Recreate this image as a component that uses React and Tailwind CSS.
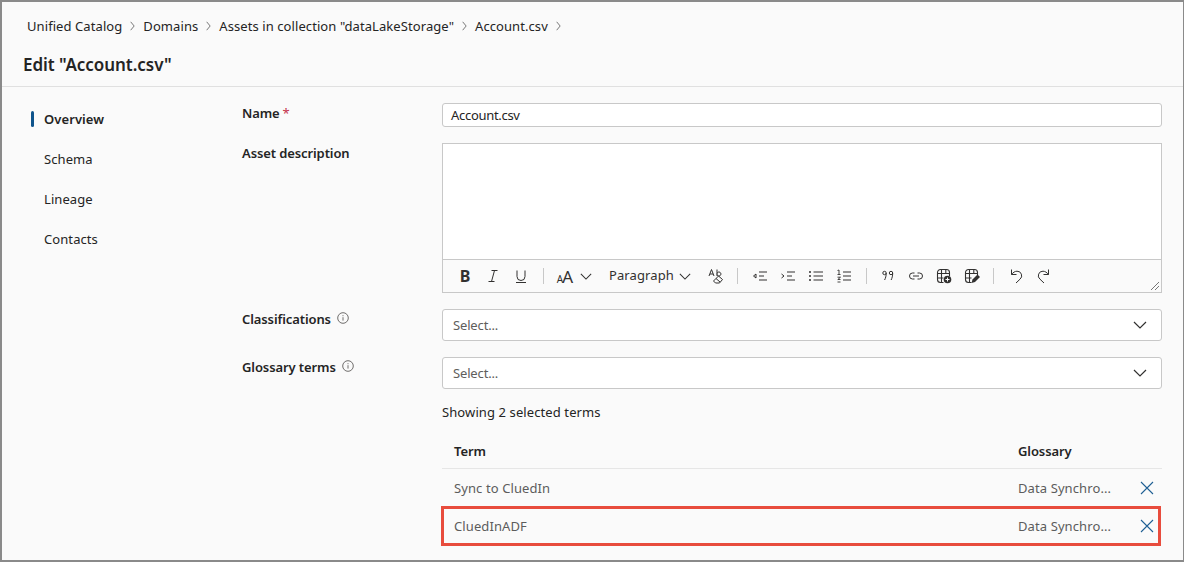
import React from "react";

const Chev = () => (
  <svg width="5" height="10" viewBox="0 0 6 10" fill="none" stroke="#6b6b6b" strokeWidth="1" preserveAspectRatio="none"><path d="M0.8 0.8 5 5 0.8 9.2" /></svg>
);
const Down = ({ w = 14, h = 8, color = "#323130" }) => (
  <svg width={w} height={h} viewBox="0 0 14 8" fill="none" stroke={color} strokeWidth="1.2"><path d="M1 1l6 6 6-6" /></svg>
);
const Info = () => (
  <svg width="12" height="12" viewBox="0 0 12 12" fill="none" stroke="#605e5c" strokeWidth="0.9"><circle cx="6" cy="6" r="5.3" /><path d="M6 5.2v3.4M6 3.2v1" /></svg>
);
const X = () => (
  <svg width="14" height="14" viewBox="0 0 14 14" fill="none" stroke="#1f5f94" strokeWidth="1.1"><path d="M1 1l12 12M13 1L1 13" /></svg>
);
const Sep = ({ cls = "" }) => <span className={`h-4 w-px shrink-0 bg-[#c8c8c8] ${cls}`} />;
const Slot = ({ children, cls = "" }) => (
  <span className={`flex w-7 shrink-0 justify-center ${cls}`}>
    <svg width="16" height="16" viewBox="0 0 16 16" fill="none" stroke="#323130" strokeWidth="1">{children}</svg>
  </span>
);

const Crumb = ({ children }) => (
  <>
    <span>{children}</span>
    <Chev />
  </>
);

const Row = ({ label, info, req, children, className = "" }) => (
  <div className={`flex ${className}`}>
    <div className="flex w-[200px] shrink-0 items-start gap-[5px] text-[13px] font-semibold leading-5 tracking-[-0.1px] text-[#242424]">
      <span>{label}</span>
      {req && <span className="-ml-[2px] font-normal text-[#c4314b]">*</span>}
      {info && <span className="mt-[3px] ml-[1px]"><Info /></span>}
    </div>
    <div className="w-[720px]">{children}</div>
  </div>
);

const Select = () => (
  <div className="flex h-8 items-center justify-between rounded-[3px] border border-[#c8c8c8] bg-white pl-[10px] pr-[14px] text-[13px] tracking-[-0.15px] text-[#605e5c]">
    <span className="pt-[2px]">Select...</span>
    <Down />
  </div>
);

export default function App() {
  return (
    <div
      className="h-[562px] w-[1184px] overflow-hidden border-2 border-r border-[#8a8a8a] bg-[#fafafa] text-[#242424]"
      style={{ fontFamily: '"Noto Sans", "Open Sans", sans-serif', letterSpacing: "0.08px" }}
    >
      <div className="flex h-[49px] items-center gap-2 pb-px pl-[25px] text-[13px] leading-5">
        <Crumb>Unified Catalog</Crumb>
        <Crumb>Domains</Crumb>
        <Crumb>Assets in collection "dataLakeStorage"</Crumb>
        <Crumb>Account.csv</Crumb>
      </div>
      <div className="flex h-[36px] items-start border-b border-[#e0e0e0] pl-[21px]">
        <h1 className="text-[17px] font-semibold leading-7 tracking-[-0.05px]">Edit "Account.csv"</h1>
      </div>
      <div className="flex">
        <nav className="w-[240px] shrink-0 pt-[23px] pl-[29px] text-[13px]">
          {["Overview", "Schema", "Lineage", "Contacts"].map((n, i) => (
            <div key={n} className="flex h-[40px] items-start">
              <span className={`mt-[1px] mr-[10px] h-[16px] w-[3px] rounded-sm ${i === 0 ? "bg-[#0f548c]" : ""}`} />
              <span className={`leading-[18px] ${i === 0 ? "font-semibold" : ""}`}>{n}</span>
            </div>
          ))}
        </nav>
        <div className="pt-[16px]">
          <Row label="Name" req>
            <div className="flex h-6 items-center rounded-[3px] border border-[#c8c8c8] bg-white pl-2 pt-[2px] text-[13px] tracking-[-0.3px]">Account.csv</div>
          </Row>
          <Row label="Asset description" className="mt-4">
            <div className="relative h-[150px] border border-[#c8c8c8] bg-white">
              <div className="h-[116px] border-b border-[#c8c8c8]" />
              <div className="flex h-[32px] items-center bg-[#fafafa] pl-2 text-[13px] text-[#323130]">
                <span className="w-7 shrink-0 text-center text-[16px] font-bold leading-none">B</span>
                <Slot><path d="M6.500 2.500h6M3.500 13.500h6M9.500 2.500l-3 11" /></Slot>
                <Slot><path d="M4 2.500v6a4 4 0 0 0 8 0v-6M3 14.500h10" /></Slot>
                <Sep cls="ml-2" />
                <span className="ml-[14px] flex w-[14px] shrink-0 items-baseline justify-center whitespace-nowrap font-normal leading-none"><span className="text-[10px]">A</span><span className="-ml-[1px] text-[17px]">A</span></span>
                <span className="ml-2 flex shrink-0"><Down w={12} h={7} /></span>
                <span className="ml-[17px] w-[64px] shrink-0 whitespace-nowrap tracking-[0.1px]">Paragraph</span>
                <span className="ml-[6px] flex shrink-0"><Down w={12} h={7} /></span>
                <span className="ml-[17px] w-4 shrink-0">
                  <svg width="16" height="16" viewBox="0 0 16 16" fill="none" stroke="#323130" strokeWidth="1"><path d="M1 8 3.500 1.500 6 8M2 6h3M9 1.500V8M9 5.500a2 2 0 1 1 0 1" /><path d="M5.500 13l5-5 4 3.500-3 3.500H7.500zM8 10.500l4 3.500" /></svg>
                </span>
                <Sep cls="ml-[13px]" />
                <Slot cls="ml-2"><path d="M1.500 8 4 6v4zM7 4h8M7 8h5M7 12h8" /></Slot>
                <Slot><path d="M1.500 6 4 8l-2.500 2M7 4h8M7 8h5M7 12h8" /></Slot>
                <Slot><path d="M1 4h2M1 8h2M1 12h2" strokeWidth="1.600" /><path d="M5.500 4h9.500M5.500 8h9.500M5.500 12h9.500" /></Slot>
                <Slot><path d="M1.500 2.500 3 2v4M1.500 6.500h3M1.500 9.200h3L1.800 11.500h2.700M1.500 14h3" strokeWidth=".9" /><path d="M7 4h8M7 8h8M7 12h8" /></Slot>
                <Sep cls="ml-2" />
                <Slot cls="ml-[7px]"><circle cx="4.500" cy="5" r="1.700" /><circle cx="11" cy="5" r="1.700" /><path d="M6.200 5c0 3-.6 5-1.600 7M12.700 5c0 3-.6 5-1.600 7" /></Slot>
                <Slot><path d="M6.500 5H4.500a3 3 0 0 0 0 6h2M9.500 5h2a3 3 0 0 1 0 6h-2M5 8h6" /></Slot>
                <Slot><path d="M4.500 1.500h6a3 3 0 0 1 3 3V8M7.500 14.500h-3a3 3 0 0 1-3-3v-7a3 3 0 0 1 3-3M1.500 5.500h12M1.500 10h6M5.500 1.500v13M9.800 1.500v4" strokeWidth="1.100" /><circle cx="11.500" cy="11.500" r="3.800" fill="#323130" stroke="none" /><path d="M11.500 9.500v4M9.500 11.500h4" stroke="#fff" /></Slot>
                <Slot><path d="M4.500 1.500h6a3 3 0 0 1 3 3V7M7.500 14.500h-3a3 3 0 0 1-3-3v-7a3 3 0 0 1 3-3M1.500 5.500h12M1.500 10h6M5.500 1.500v13M9.800 1.500v4" strokeWidth="1.100" /><path d="M7.500 15l1-3.500 5-5 2.500 2.500-5 5z" fill="#323130" stroke="none" /></Slot>
                <Sep cls="ml-[7px]" />
                <Slot cls="ml-2"><path d="M3.500 1.500V6.500H8.500M3.500 6.500C5 4.500 7 3.200 9 3.200a4.500 4.500 0 0 1 3 8L8 15" /></Slot>
                <Slot><path d="M12.500 1.500V6.500H7.500M12.500 6.500C11 4.500 9 3.200 7 3.200a4.500 4.500 0 0 0-3 8L8 15" /></Slot>
              </div>
              <svg width="10" height="10" viewBox="0 0 10 10" stroke="#777" strokeWidth="1" className="absolute bottom-[1px] right-[1px]"><path d="M1 9 9 1M5 9l4-4" /></svg>
            </div>
          </Row>
          <Row label="Classifications" info className="mt-4"><Select /></Row>
          <Row label="Glossary terms" info className="mt-4">
            <Select />
            <div className="mt-[13px] text-[13px] leading-5 tracking-[0.1px]">Showing 2 selected terms</div>
            <div className="mt-[9px] flex h-[38px] items-center border-b border-[#e6e6e6] pl-3 pt-[4px] text-[13px] font-semibold tracking-[-0.1px]">
              <span className="flex-1">Term</span>
              <span className="w-[144px]">Glossary</span>
            </div>
            <div className="flex h-[37px] items-center pl-3 text-[13px] tracking-[0.1px] text-[#5c5c5c]">
              <span className="flex-1 pt-[2px]">Sync to CluedIn</span>
              <span className="w-[122px] whitespace-nowrap pt-[2px]">Data Synchro...</span>
              <span className="flex w-[22px]"><X /></span>
            </div>
            <div className="-ml-px mr-px flex h-[40px] items-center border-[3px] border-[#e84c3d] pl-[10px] text-[13px] tracking-[0.1px] text-[#5c5c5c]">
              <span className="flex-1 pt-[2px]">CluedInADF</span>
              <span className="w-[122px] whitespace-nowrap pt-[2px]">Data Synchro...</span>
              <span className="flex w-[18px]"><X /></span>
            </div>
          </Row>
        </div>
      </div>
    </div>
  );
}
